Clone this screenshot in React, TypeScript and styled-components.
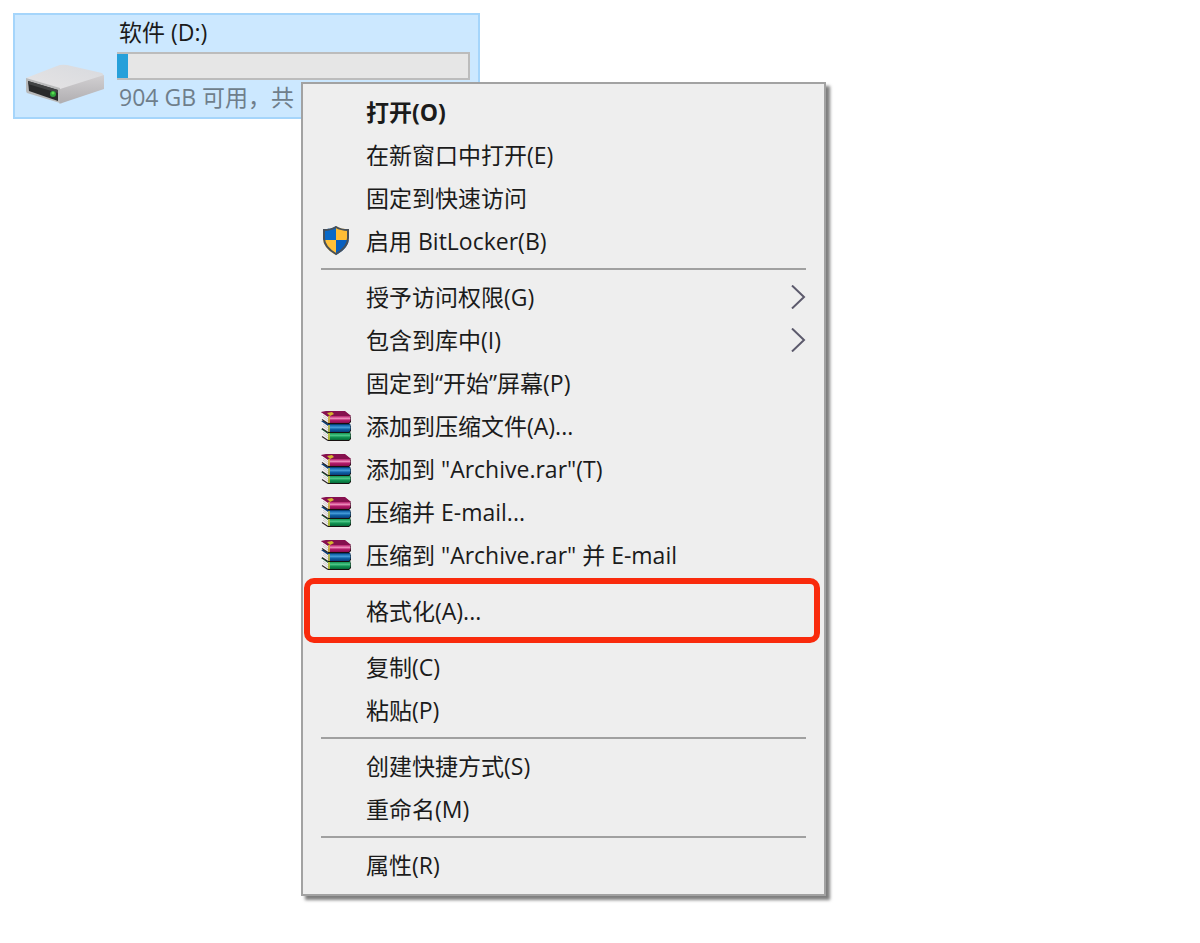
import React from 'react';
import styled, { createGlobalStyle, css } from 'styled-components';

const GlobalStyle = createGlobalStyle`
  *, *::before, *::after { box-sizing: border-box; }
  body {
    margin: 0;
    background: #fff;
    color: #1b1b1b;
    font-family: 'Open Sans', 'Noto Sans CJK SC', sans-serif;
    font-size: 23px;
    line-height: 28px;
  }
`;

const Explorer = styled.main`
  position: relative;
  min-height: 100vh;
  padding: 13px;
`;

const DriveTile = styled.section`
  display: flex;
  align-items: flex-end;
  gap: 12px;
  width: 467px;
  max-width: 100%;
  padding: 3px 8px 6px 10px;
  background: #cce8ff;
  border: 2px solid #a5d5fb;
`;

const DriveIconBox = styled.div`
  flex: none;
  width: 80px;
  height: 50px;
  margin-bottom: 6px;
`;

const DriveInfo = styled.div`
  flex: 1;
`;

const DriveName = styled.h1`
  margin: 0;
  padding-left: 2px;
  font-size: 23px;
  font-weight: 400;
  line-height: 28px;
`;

const CapacityBar = styled.div`
  height: 28px;
  margin: 6px 0 3px;
  background: #e6e6e6;
  border: 2px solid #bcbcbc;
  border-left: 0;
`;

const CapacityFill = styled.div`
  height: 100%;
  background: #26a0da;
`;

const DriveSpace = styled.p`
  margin: 0;
  padding-left: 2px;
  color: #6f7e8b;
  white-space: nowrap;
`;

const ContextMenu = styled.div`
  position: absolute;
  top: 82px;
  left: 301px;
  width: 525px;
  padding: 6px 0 8px;
  background: #eee;
  border: 2px solid #a2a2a2;
  box-shadow: 4px 4px 3px rgba(0, 0, 0, 0.5);
`;

const MenuItem = styled.button<{ $strong?: boolean }>`
  display: grid;
  grid-template-columns: 30px 1fr 16px;
  column-gap: 15px;
  align-items: center;
  width: 100%;
  height: 43px;
  padding: 0 18px;
  background: none;
  border: 0;
  color: inherit;
  font: inherit;
  font-weight: ${(p) => (p.$strong ? 700 : 400)};
  text-align: left;
  white-space: nowrap;
`;

const IconSlot = styled.span`
  display: flex;
  justify-content: center;
  svg { display: block; }
`;

const Separator = styled.hr`
  height: 2px;
  margin: 6px 18px 5px;
  background: #a0a0a0;
  border: 0;
`;

const Highlight = styled.div<{ $on: boolean }>`
  ${(p) =>
    p.$on &&
    css`
      margin: 2px 4px 2px 1px;
      padding: 5px 0;
      border: 6px solid #f92a0c;
      border-radius: 10px;

      ${MenuItem} {
        padding: 0 11px;
      }
    `}
`;

const DriveIcon = () => (
  <svg width="80" height="50" viewBox="0 0 80 50" aria-hidden="true">
    <defs>
      <linearGradient id="driveTop" x1="0" y1="1" x2="1" y2="0">
        <stop offset="0" stopColor="#e6e4e5" />
        <stop offset="1" stopColor="#d8dade" />
      </linearGradient>
      <linearGradient id="driveSide" x1="0" y1="0" x2="0" y2="1">
        <stop offset="0" stopColor="#d2d0d2" />
        <stop offset="1" stopColor="#b0aeb1" />
      </linearGradient>
    </defs>
    <path d="M1 23 L32 11 Q36 9 42 10 L77 18 Q79 19 78 21 L35 36 Z" fill="url(#driveTop)" />
    <path d="M35 34 L79 20 V34 L37 48 Q35 49 34 48 Z" fill="url(#driveSide)" />
    <path d="M1 23 L35 33 V48 L2 38 Q1 37 1 35 Z" fill="#b8b9ba" />
    <path d="M3 26 L33 35 V46 L4 36 Z" fill="#292a2b" />
    <path d="M3 26 L33 35 V38 L3 29 Z" fill="#414344" />
    <circle cx="28" cy="39" r="3" fill="#2fa23b" />
    <circle cx="28" cy="38" r="1.5" fill="#59dc4f" />
  </svg>
);

const ShieldIcon = () => (
  <svg width="28" height="30" viewBox="0 0 28 30" aria-hidden="true">
    <defs>
      <clipPath id="shieldShape">
        <path d="M14 0 C10 3 6 3 1 3 V12 C1 20 7 25 14 29 C21 25 27 20 27 12 V3 C22 3 18 3 14 0Z" />
      </clipPath>
    </defs>
    <g clipPath="url(#shieldShape)">
      <path d="M0 0H14V14H0Z" fill="#0869c8" />
      <path d="M14 0H28V14H14Z" fill="#ffbd35" />
      <path d="M0 14H14V30H0Z" fill="#ffc13a" />
      <path d="M14 14H28V30H14Z" fill="#075fc0" />
    </g>
    <path
      d="M14 1 C10 3.500 6 4 2 4 V12 C2 19 7 24 14 28 C21 24 26 19 26 12 V4 C22 4 18 3.500 14 1Z"
      fill="none"
      stroke="#47505a"
      strokeWidth="2"
    />
  </svg>
);

const BOOKS = [
  { top: 22, name: 'green', dark: '#076b3a', mid: '#109452', light: '#4cc586' },
  { top: 14, name: 'blue', dark: '#083f7a', mid: '#0f62a8', light: '#4499d6' },
  { top: 5, name: 'red', dark: '#8a0c4e', mid: '#b41c6a', light: '#ee8abb' },
];

const ArchiveIcon = () => (
  <svg width="30" height="30" viewBox="0 0 30 30" aria-hidden="true">
    <defs>
      {BOOKS.map((book) => (
        <linearGradient key={book.name} id={`spine-${book.name}`} x1="0" y1="0" x2="0" y2="1">
          <stop offset="0" stopColor={book.mid} />
          <stop offset="0.35" stopColor={book.light} />
          <stop offset="0.6" stopColor={book.mid} />
          <stop offset="1" stopColor={book.dark} />
        </linearGradient>
      ))}
    </defs>
    {BOOKS.map(({ top, name, dark }) => (
      <g key={name} transform={`translate(0 ${top})`}>
        <path d="M1 -4 L7 0 V8 L2 4Z" fill="#f6f3f3" />
        <path d="M2 -1 L7 3 M2 1 L7 5" stroke="#c4bfc1" strokeWidth="0.8" />
        <path d="M0 -4 L24 -5 L30 0 L7 1Z" fill={dark} />
        <path d="M7 0 H29 L30 1 V6 L28 8 H7Z" fill="#16100f" />
        <path d="M7 0 H29 L29.500 1 V5 L28 7 H7Z" fill={`url(#spine-${name})`} />
        <path d="M1 3.500 L7 7.500" stroke="#2a2424" strokeWidth="1.2" />
        <path d="M8 0 V7" stroke="#cfc23a" strokeWidth="1.6" />
      </g>
    ))}
    <path d="M0 1 L5 0 H23 L30 5 H7Z" fill="#86104e" />
    <path d="M6 2 L11 1 L13 3 L9 5Z" fill="#d2b62d" />
  </svg>
);

const ChevronIcon = () => (
  <svg width="16" height="24" viewBox="0 0 16 24" aria-hidden="true">
    <path d="M2 0.500 L14 12 L2 23.500" fill="none" stroke="#5c5a6c" strokeWidth="2" />
  </svg>
);

type Entry = {
  label: string;
  icon?: 'shield' | 'archive';
  submenu?: boolean;
  strong?: boolean;
};

type Group = { entries: Entry[]; highlighted?: boolean };

const GROUPS: Group[] = [
  {
    entries: [
      { label: '打开(O)', strong: true },
      { label: '在新窗口中打开(E)' },
      { label: '固定到快速访问' },
      { label: '启用 BitLocker(B)', icon: 'shield' },
    ],
  },
  {
    entries: [
      { label: '授予访问权限(G)', submenu: true },
      { label: '包含到库中(I)', submenu: true },
      { label: '固定到“开始”屏幕(P)' },
      { label: '添加到压缩文件(A)...', icon: 'archive' },
      { label: '添加到 "Archive.rar"(T)', icon: 'archive' },
      { label: '压缩并 E-mail...', icon: 'archive' },
      { label: '压缩到 "Archive.rar" 并 E-mail', icon: 'archive' },
    ],
  },
  { entries: [{ label: '格式化(A)...' }], highlighted: true },
  { entries: [{ label: '复制(C)' }, { label: '粘贴(P)' }] },
  { entries: [{ label: '创建快捷方式(S)' }, { label: '重命名(M)' }] },
  { entries: [{ label: '属性(R)' }] },
];

const needsSeparator = (index: number) =>
  index > 0 && !GROUPS[index].highlighted && !GROUPS[index - 1].highlighted;

export default function App() {
  const usedPercent = 3;

  return (
    <>
      <GlobalStyle />
      <Explorer lang="zh-CN">
        <DriveTile>
          <DriveIconBox>
            <DriveIcon />
          </DriveIconBox>
          <DriveInfo>
            <DriveName>软件 (D:)</DriveName>
            <CapacityBar
              role="meter"
              aria-label="软件 (D:)"
              aria-valuemin={0}
              aria-valuemax={100}
              aria-valuenow={usedPercent}
            >
              <CapacityFill style={{ width: `${usedPercent}%` }} />
            </CapacityBar>
            <DriveSpace>904 GB 可用，共</DriveSpace>
          </DriveInfo>
        </DriveTile>

        <ContextMenu role="menu">
          {GROUPS.map((group, index) => (
            <React.Fragment key={group.entries[0].label}>
              {needsSeparator(index) && <Separator />}
              <Highlight $on={Boolean(group.highlighted)} role="group">
                {group.entries.map((entry) => (
                  <MenuItem
                    key={entry.label}
                    type="button"
                    role="menuitem"
                    aria-haspopup={entry.submenu ? 'menu' : undefined}
                    $strong={entry.strong}
                  >
                    <IconSlot>
                      {entry.icon === 'shield' && <ShieldIcon />}
                      {entry.icon === 'archive' && <ArchiveIcon />}
                    </IconSlot>
                    <span>{entry.label}</span>
                    {entry.submenu && <ChevronIcon />}
                  </MenuItem>
                ))}
              </Highlight>
            </React.Fragment>
          ))}
        </ContextMenu>
      </Explorer>
    </>
  );
}
